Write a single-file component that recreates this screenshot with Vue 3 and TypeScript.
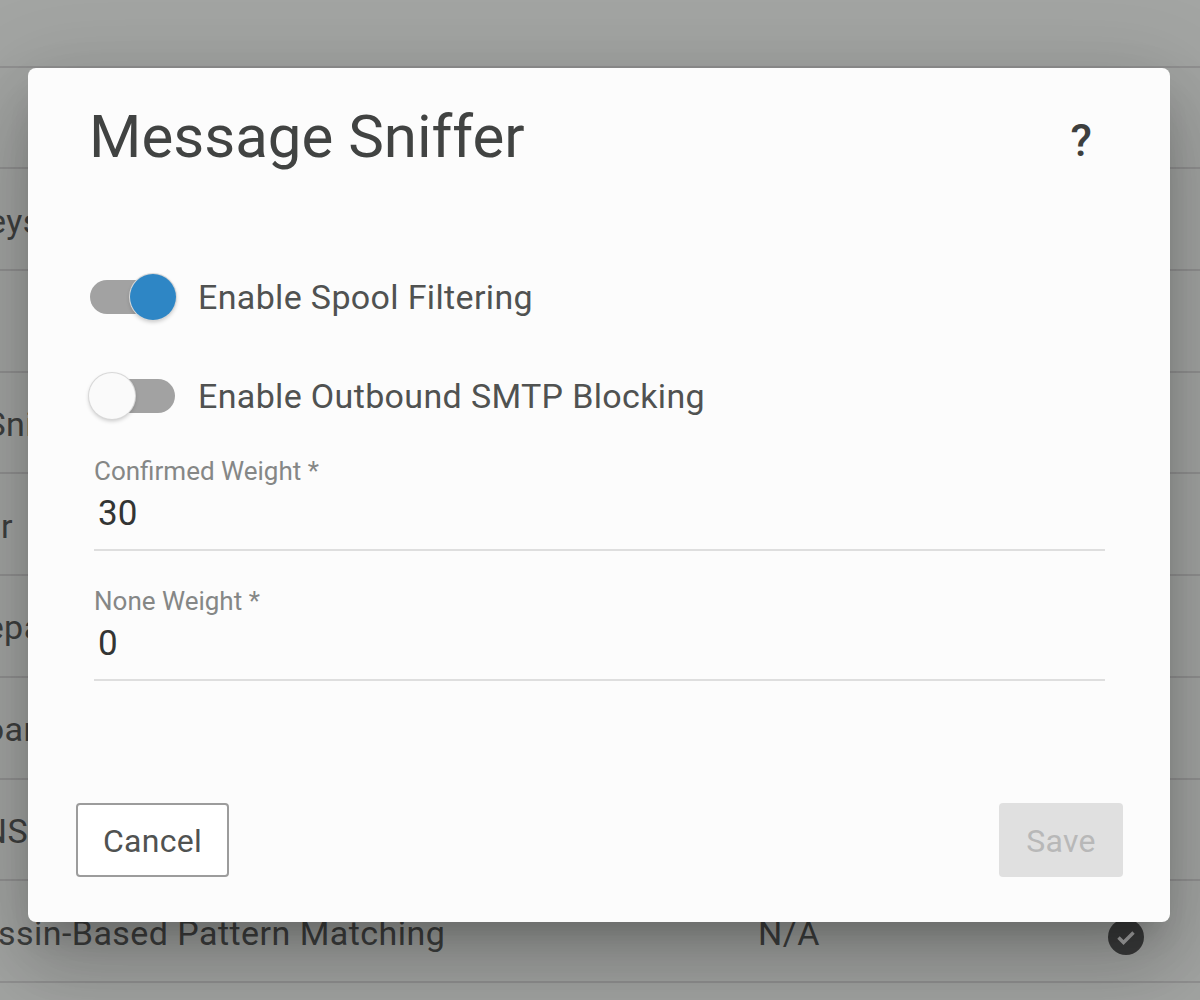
<script setup lang="ts">
// rows of the table behind the dialog, only the tails stick out on the left
const rows = [
  { name: '', shift: 0 },
  { name: '', shift: 0 },
  { name: 'Domain Keys', shift: -162 },
  { name: '', shift: 0 },
  { name: 'Message Sniffer', shift: -165 },
  { name: 'Spam Filter', shift: -164 },
  { name: 'Separator', shift: -35 },
  { name: 'Board', shift: -37 },
  { name: 'DNS', shift: -40 },
  { name: 'SpamAssassin-Based Pattern Matching', shift: -169 },
  { name: '', shift: 0 },
]
</script>

<template>
  <div class="page">
    <div class="table">
      <div v-for="(row, i) in rows" :key="i" class="row">
        <span class="name" :style="{ marginLeft: `${row.shift}px` }">{{ row.name }}</span>
        <template v-if="i === 9">
          <span class="value">N/A</span>
          <span class="status">
            <svg width="36" height="36" viewBox="0 0 36 36">
              <circle cx="18" cy="18" r="18" fill="#5a5c5b" />
              <path d="M10.5 18.5l5 5 10-10" fill="none" stroke="#fff" stroke-width="3.4" />
            </svg>
          </span>
        </template>
      </div>
    </div>
    <div class="backdrop"></div>

    <div class="dialog">
      <header class="head">
        <h1>Message Sniffer</h1>
        <span class="help">?</span>
      </header>

      <div class="switches">
        <label class="switch on">
          <span class="track"><span class="thumb"></span></span>
          <span class="text">Enable Spool Filtering</span>
        </label>
        <label class="switch">
          <span class="track"><span class="thumb"></span></span>
          <span class="text">Enable Outbound SMTP Blocking</span>
        </label>
      </div>

      <div class="field first">
        <div class="lbl">Confirmed Weight *</div>
        <div class="val">30</div>
      </div>
      <div class="field">
        <div class="lbl">None Weight *</div>
        <div class="val">0</div>
      </div>

      <footer class="foot">
        <button class="btn cancel">Cancel</button>
        <button class="btn save" disabled>Save</button>
      </footer>
    </div>
  </div>
</template>

<style scoped>
.page {
  position: relative;
  width: 1200px;
  height: 1000px;
  overflow: hidden;
  background: #f8faf8;
  font-family: Roboto, "Liberation Sans", sans-serif;
}
.table {
  margin-top: -34px;
}
.row {
  display: flex;
  align-items: center;
  height: 101.7px;
  box-sizing: border-box;
  padding-top: 3px;
  border-bottom: 2px solid #dcdcdc;
  font-size: 34px;
  letter-spacing: 0.45px;
  color: #5f6160;
  white-space: nowrap;
  position: relative;
}
.value {
  position: absolute;
  left: 758px;
}
.status {
  position: absolute;
  left: 1108px;
  top: 38px;
  line-height: 0;
}
.backdrop {
  position: absolute;
  inset: 0;
  background: rgba(0, 0, 0, 0.34);
}
.dialog {
  position: absolute;
  left: 28px;
  top: 68px;
  width: 1142px;
  height: 854px;
  box-sizing: border-box;
  display: flex;
  flex-direction: column;
  padding: 0 47px 45px 48px;
  background: #fcfcfc;
  border-radius: 8px;
  box-shadow: 0 22px 30px -14px rgba(0, 0, 0, 0.2), 0 48px 76px 6px rgba(0, 0, 0, 0.14), 0 18px 92px 16px rgba(0, 0, 0, 0.12);
}
.head {
  display: flex;
  justify-content: space-between;
  align-items: center;
  height: 136px;
  padding: 0 31px 0 13px;
}
h1 {
  margin: 0;
  font-size: 60px;
  font-weight: 400;
  color: #414342;
}
.help {
  font-size: 44px;
  font-weight: 500;
  color: #3d3f3e;
  padding-top: 10px;
}
.switches {
  display: flex;
  flex-direction: column;
  gap: 47px;
  margin-top: 67px;
  padding-left: 14px;
}
.switch {
  display: flex;
  align-items: center;
  gap: 23px;
  height: 52px;
}
.track {
  position: relative;
  width: 85px;
  height: 34px;
  border-radius: 17px;
  background: #a2a2a2;
}
.thumb {
  position: absolute;
  top: -6px;
  left: -1px;
  width: 46px;
  height: 46px;
  border-radius: 50%;
  background: #fafafa;
  box-shadow: 0 0 0 1px #d8d8d8, 0 2px 4px rgba(0, 0, 0, 0.22);
}
.on .thumb {
  left: 40px;
  background: #2e86c5;
}
.text {
  font-size: 34px;
  color: #505251;
  letter-spacing: 0.35px;
}
.field {
  margin: 0 18px;
  height: 130px;
  box-sizing: border-box;
  border-bottom: 2px solid #dedede;
  padding-top: 36px;
}
.field.first {
  margin-top: -1px;
}
.lbl {
  font-size: 26px;
  line-height: 28px;
  color: #858786;
}
.val {
  font-size: 35px;
  line-height: 40px;
  margin-top: 9px;
  padding-left: 4px;
  color: #333534;
}
.foot {
  display: flex;
  justify-content: space-between;
  margin-top: auto;
}
.btn {
  height: 74px;
  box-sizing: border-box;
  border-radius: 4px;
  padding-top: 3px;
  font-family: inherit;
  font-size: 32px;
  letter-spacing: 0.3px;
}
.cancel {
  width: 153px;
  background: #fff;
  border: 2px solid #9c9c9c;
  color: #505251;
}
.save {
  width: 124px;
  background: #e0e0e0;
  border: none;
  color: #b8b8b8;
}
</style>
